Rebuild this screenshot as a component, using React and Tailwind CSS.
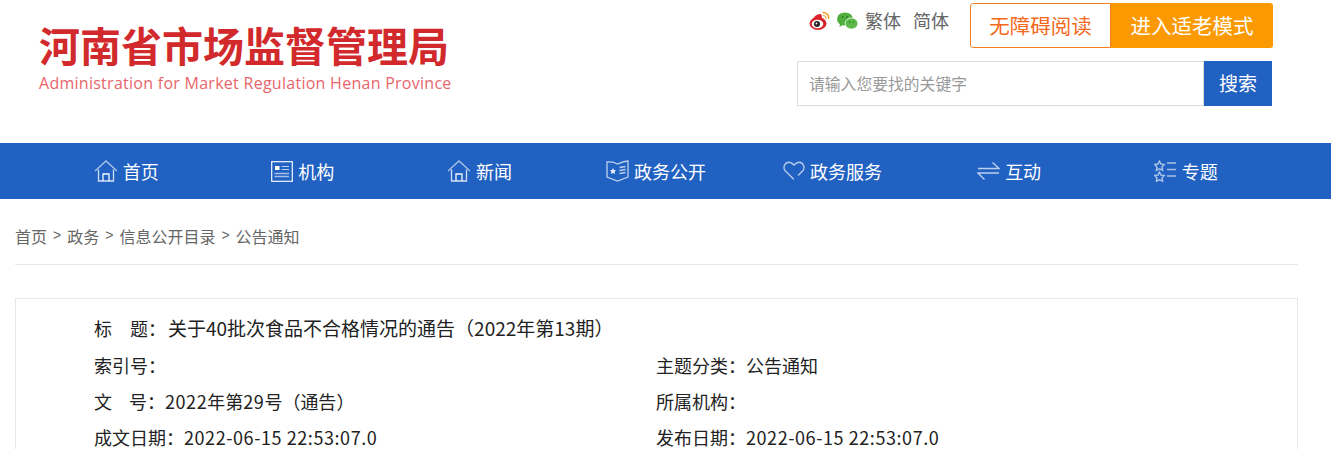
import React from "react";

const CJK = "font-['Noto_Sans_CJK_SC','Liberation_Sans',sans-serif]";
const COLON = "\uFF1A";
const LP = "\uFF08";
const RP = "\uFF09";

const stroke = { fill: "none", stroke: "#fff", strokeOpacity: 0.62, strokeWidth: 1.3 };

function Home() {
  return (
    <svg width="24" height="22" viewBox="0 0 24 22" {...stroke}>
      <path d="M1 11 L12 1 L23 11" />
      <path d="M4.5 9.5 V21 H19.5 V9.5" strokeOpacity="0.8" />
      <path d="M9 21 V14 H15 V21" stroke="#fff" strokeOpacity="0.95" />
    </svg>
  );
}
function Org() {
  return (
    <svg width="22" height="21" viewBox="0 0 22 21" fill="none">
      <rect x="0.7" y="0.7" width="20.6" height="19.6" stroke="#fff" strokeOpacity="0.95" strokeWidth="1.2" />
      <rect x="4" y="5" width="4.5" height="4" fill="#fff" />
      <path d="M10.5 5.5H18M10.5 8.5H18" stroke="#fff" strokeOpacity="0.7" strokeWidth="1.2" />
      <path d="M3.5 12.5H18M3.5 15.5H18" stroke="#fff" strokeOpacity="0.6" strokeWidth="1.6" />
    </svg>
  );
}
function Book() {
  return (
    <svg width="23" height="22" viewBox="0 0 23 22" fill="none" stroke="#fff" strokeOpacity="0.7" strokeWidth="1.3">
      <path d="M1 2 C5 1.5 8 2 11.5 4 C14 3 17 1.5 22 1 V17 L11.5 21 L1 17 Z" />
      <path d="M7 8 L8 10 L10 10.3 L8.6 11.8 L9 14 L7 13 L5 14 L5.4 11.8 L4 10.3 L6 10 Z" fill="#fff" fillOpacity="0.9" stroke="none" />
      <path d="M13.5 7.5 L19.5 6.5 M13.5 10.5 L19.5 9.5 M13.5 13.5 L19.5 12.5" />
    </svg>
  );
}
function Heart() {
  return (
    <svg width="22" height="20" viewBox="0 0 22 20" fill="none" stroke="#fff" strokeOpacity="0.65" strokeWidth="1.4">
      <path d="M11 18.5 L2.2 9.8 C-0.5 6.5 1.8 1.2 6 1.2 C8 1.2 9.5 2.3 11 4 C12.5 2.3 14 1.2 16 1.2 C20.2 1.2 22.5 6.5 19.8 9.8 L15 14.5" />
    </svg>
  );
}
function Swap() {
  return (
    <svg width="23" height="20" viewBox="0 0 23 20" fill="none" stroke="#fff" strokeOpacity="0.7" strokeWidth="1.4">
      <path d="M1 7.5 H22 L15.5 1.5" />
      <path d="M22 12 H1 L7.5 18.5" />
    </svg>
  );
}
const STAR = "M5.5 1 L7 4 L10.2 4.5 L8 7 L8.6 10.2 L5.5 8.8 L2.4 10.2 L3 7 L0.8 4.5 L4 4 Z";
function Topics() {
  return (
    <svg width="23" height="22" viewBox="0 0 23 22" fill="none" stroke="#fff" strokeOpacity="0.6" strokeWidth="1.5">
      <path d={STAR} />
      <path d={STAR} transform="translate(0 11)" />
      <path d="M13 3H22M13 9.5H22M13 16H22" strokeWidth="1.6" />
    </svg>
  );
}
function Weibo() {
  return (
    <svg width="22" height="20" viewBox="0 0 22 20">
      <ellipse cx="9" cy="12.5" rx="8.5" ry="6.5" fill="#d9242c" />
      <path d="M3 9 C6 4 10 2 12 3.5 C14 5 12 8 12 8 L4 12 Z" fill="#d9242c" />
      <ellipse cx="8.5" cy="13" rx="5.8" ry="4.2" fill="#fff" />
      <circle cx="8" cy="13" r="3" fill="#222" />
      <circle cx="7.5" cy="12.5" r="0.9" fill="#fff" />
      <path d="M13.5 1.5 C17 1 20.5 4 19.5 8" fill="none" stroke="#f0a02c" strokeWidth="1.6" />
      <path d="M14 4.5 C15.8 4.3 17.3 6 16.8 7.8" fill="none" stroke="#f0a02c" strokeWidth="1.2" />
    </svg>
  );
}
function Wechat() {
  return (
    <svg width="21" height="18" viewBox="0 0 21 18">
      <ellipse cx="8" cy="7" rx="8" ry="6.6" fill="#4fae3c" />
      <path d="M3 11 L2.5 15 L7 12 Z" fill="#4fae3c" />
      <ellipse cx="14.5" cy="11.5" rx="6.4" ry="5.6" fill="#5cb947" stroke="#fff" strokeWidth="0.8" />
      <circle cx="5.5" cy="5" r="1" fill="#2f7d23" />
      <circle cx="10" cy="5" r="1" fill="#2f7d23" />
      <circle cx="12.5" cy="10" r="0.8" fill="#2f7d23" />
      <circle cx="16.5" cy="10" r="0.8" fill="#2f7d23" />
    </svg>
  );
}

const NAV = [
  [Home, "首页"],
  [Org, "机构"],
  [Home, "新闻"],
  [Book, "政务公开"],
  [Heart, "政务服务"],
  [Swap, "互动"],
  [Topics, "专题"],
];

function Meta({ children, className = "" }) {
  return <div className={"h-9 leading-9 whitespace-nowrap " + className}>{children}</div>;
}
function Num({ children }) {
  return <span className="tracking-[0.57px]">{children}</span>;
}
function Sep() {
  return <span className="font-['Liberation_Sans',sans-serif] text-[14px]">&gt;</span>;
}

export default function App() {
  return (
    <div className={"h-[449px] overflow-hidden bg-white " + CJK}>
      <header className="flex h-[143px] justify-between pl-[39px] pr-[58px]">
        <div className="pt-[16px]">
          <div className="whitespace-nowrap text-[41px] font-bold leading-[56px] text-[#d22a2c]">河南省市场监督管理局</div>
          <div className="whitespace-nowrap font-['Open_Sans',sans-serif] text-[16px] leading-[22px] tracking-[0.27px] text-[#e8656b]">
            Administration for Market Regulation Henan Province
          </div>
        </div>
        <div className="flex w-[476px] flex-col items-end pt-[3px]">
          <div className="flex h-[45px] w-full items-start">
            <div className="ml-[12px] mt-[8px] flex items-center">
              <Weibo />
              <span className="ml-[6px]"><Wechat /></span>
            </div>
            <span className="ml-[7px] mt-[5px] text-[18px] leading-[25px] text-[#666]">繁体</span>
            <span className="ml-[12px] mt-[5px] text-[18px] leading-[25px] text-[#666]">简体</span>
            <div className="ml-auto flex h-[45px] w-[303px] overflow-hidden rounded-[3px]">
              <div className="flex w-[141px] items-center justify-center rounded-l-[3px] border border-[#f57c1f] text-[20.5px] text-[#f5681a]">无障碍阅读</div>
              <div className="flex flex-1 items-center justify-center bg-[#fb9903] text-[20.5px] text-white">进入适老模式</div>
            </div>
          </div>
          <div className="mr-px mt-[13px] flex h-[45px] w-[475px]">
            <div className="flex flex-1 items-center border border-[#dcdcdc] pl-[11px] text-[15.8px] text-[#999]">请输入您要找的关键字</div>
            <div className="flex w-[68px] items-center justify-center bg-[#2161c2] text-[19px] text-white">搜索</div>
          </div>
        </div>
      </header>

      <nav className="h-14 bg-[#2161c2]">
        <ul className="ml-[38px] grid h-full w-[1236px] grid-cols-7">
          {NAV.map(([Icon, label], i) => (
            <li key={i} className="flex items-center justify-center gap-[5px] text-[18px] text-white">
              <Icon />
              <span>{label}</span>
            </li>
          ))}
        </ul>
      </nav>

      <main className="px-[15px] pr-[33px]">
        <div className="flex h-[66px] items-center gap-[6px] border-b border-[#e8e8e8] pt-[8px] text-[16px] text-[#666]">
          <span>首页</span><Sep />
          <span>政务</span><Sep />
          <span>信息公开目录</span><Sep />
          <span>公告通知</span>
        </div>
        <section className="mt-[33px] border border-[#e8e8e8] pl-[78px] pt-[11px] text-[18px] text-[#222]">
          <Meta className="h-[37px]">标<span className="inline-block w-[18px]" />题{COLON}<span className="ml-[2px] text-[19px]">关于40批次食品不合格情况的通告{LP}2022年第13期{RP}</span></Meta>
          <div className="grid grid-cols-[562px_1fr]">
            <Meta>索引号{COLON}</Meta>
            <Meta>主题分类{COLON}公告通知</Meta>
            <Meta>文<span className="inline-block w-[17px]" />号{COLON}<Num>2022</Num>年第<Num>29</Num>号{LP}通告{RP}</Meta>
            <Meta>所属机构{COLON}</Meta>
            <Meta>成文日期{COLON}<Num>2022-06-15 22:53:07.0</Num></Meta>
            <Meta>发布日期{COLON}<Num>2022-06-15 22:53:07.0</Num></Meta>
          </div>
        </section>
      </main>
    </div>
  );
}
